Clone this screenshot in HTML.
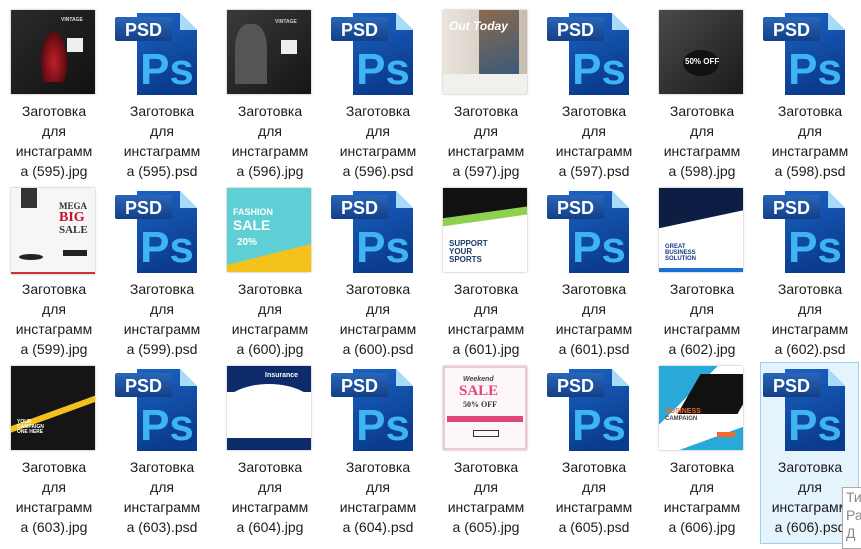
<!DOCTYPE html>
<html><head><meta charset="utf-8"><style>
body{margin:0;width:861px;height:538px;background:#fff;position:relative;overflow:hidden;font-family:"Liberation Sans","DejaVu Sans",sans-serif;}
.it{position:absolute;width:108px;height:178px}
.lbl{position:absolute;left:0;top:91px;width:108px;text-align:center;font-size:14px;line-height:20px;color:#1b1b1b}
.th{position:absolute;left:11px;top:0;width:84px;height:84px;overflow:hidden;box-shadow:0 0 2px rgba(0,0,0,.35)}
.ps{position:absolute;left:0;top:-10px}
.t{position:absolute;font-family:"Liberation Sans",sans-serif;font-weight:bold;line-height:1}
.sel{position:absolute;left:760px;top:362px;width:97px;height:180px;border:1px solid #99d1f4;background:#e5f3fd}
.tip{position:absolute;left:842px;top:487px;width:30px;height:60px;border:1px solid #aaa;background:#fff;font-size:14px;color:#888;line-height:18px;padding-left:3px}
</style></head><body>
<div class="sel"></div>
<svg width="0" height="0" style="position:absolute"><defs>
<linearGradient id="g" x1="0" y1="0" x2="0.3" y2="1"><stop offset="0" stop-color="#1b63c4"/><stop offset="1" stop-color="#0a3b8c"/></linearGradient>
<linearGradient id="tg" x1="0" y1="0" x2="0" y2="1"><stop offset="0" stop-color="#2a66b8"/><stop offset="1" stop-color="#143f86"/></linearGradient>
<g id="psd">
<path d="M29 13 L72 13 L89 30 L89 95 L29 95 Z" fill="url(#g)"/>
<path d="M72 13 L72 30 L89 30 Z" fill="#a8dbf7"/>
<rect x="7" y="17" width="57" height="24" rx="2" fill="url(#tg)"/>
<text x="35.5" y="36" font-family="Liberation Sans" font-weight="bold" font-size="18" fill="#fff" text-anchor="middle">PSD</text>
<text x="59" y="84" font-family="Liberation Sans" font-weight="bold" font-size="44" fill="#3fb4f2" text-anchor="middle">Ps</text>
</g></defs></svg>

<!-- Row 1 -->
<div class="it" style="left:0;top:10px"><div class="th" style="background:linear-gradient(135deg,#2a2a2a,#111)"><div style="position:absolute;left:30px;top:22px;width:26px;height:50px;background:radial-gradient(ellipse at 50% 60%,#c0202a,#5a0a10 70%,transparent 72%)"></div><div class="t" style="left:50px;top:8px;color:#ddd;font-size:5px">VINTAGE</div><div style="position:absolute;left:56px;top:28px;width:16px;height:14px;background:#eee"></div></div><div class="lbl">Заготовка<br>для<br>инстаграмм<br>а (595).jpg</div></div>
<div class="it" style="left:108px;top:0"><svg class="ps" width="108" height="100" style="top:0"><use href="#psd"/></svg><div class="lbl" style="top:101px">Заготовка<br>для<br>инстаграмм<br>а (595).psd</div></div>
<div class="it" style="left:216px;top:10px"><div class="th" style="background:linear-gradient(135deg,#3a3a3a,#151515)"><div style="position:absolute;left:8px;top:14px;width:32px;height:60px;background:#555;border-radius:40% 40% 0 0"></div><div class="t" style="left:48px;top:10px;color:#ccc;font-size:5px">VINTAGE</div><div style="position:absolute;left:54px;top:30px;width:16px;height:14px;background:#eee"></div></div><div class="lbl">Заготовка<br>для<br>инстаграмм<br>а (596).jpg</div></div>
<div class="it" style="left:324px;top:0"><svg class="ps" width="108" height="100" style="top:0"><use href="#psd"/></svg><div class="lbl" style="top:101px">Заготовка<br>для<br>инстаграмм<br>а (596).psd</div></div>
<div class="it" style="left:432px;top:10px"><div class="th" style="background:linear-gradient(90deg,#e9e4dc,#c8bcae)"><div style="position:absolute;left:36px;top:0;width:40px;height:64px;background:linear-gradient(160deg,#8a6a50,#3a5a78)"></div><div style="position:absolute;left:0;top:64px;width:84px;height:20px;background:#f2f0ec"></div><div class="t" style="left:6px;top:10px;color:#fff;font-size:12px;font-style:italic">Out Today</div></div><div class="lbl">Заготовка<br>для<br>инстаграмм<br>а (597).jpg</div></div>
<div class="it" style="left:540px;top:0"><svg class="ps" width="108" height="100" style="top:0"><use href="#psd"/></svg><div class="lbl" style="top:101px">Заготовка<br>для<br>инстаграмм<br>а (597).psd</div></div>
<div class="it" style="left:648px;top:10px"><div class="th" style="background:linear-gradient(135deg,#4a4a4a,#1a1a1a)"><div style="position:absolute;left:24px;top:40px;width:36px;height:26px;border-radius:50%;background:#111"></div><div class="t" style="left:26px;top:48px;color:#fff;font-size:8px">50% OFF</div></div><div class="lbl">Заготовка<br>для<br>инстаграмм<br>а (598).jpg</div></div>
<div class="it" style="left:756px;top:0"><svg class="ps" width="108" height="100" style="top:0"><use href="#psd"/></svg><div class="lbl" style="top:101px">Заготовка<br>для<br>инстаграмм<br>а (598).psd</div></div>

<!-- Row 2 -->
<div class="it" style="left:0;top:188px"><div class="th" style="background:#f6f6f6;border-bottom:2px solid #c33"><div style="position:absolute;left:10px;top:0;width:16px;height:20px;background:#333"></div><div class="t" style="left:48px;top:14px;color:#333;font-size:9px;font-family:'Liberation Serif'">MEGA</div><div class="t" style="left:48px;top:23px;color:#c8102e;font-size:14px;font-family:'Liberation Serif'">BIG</div><div class="t" style="left:48px;top:37px;color:#333;font-size:11px;font-family:'Liberation Serif'">SALE</div><div style="position:absolute;left:52px;top:62px;width:24px;height:6px;background:#222"></div><div style="position:absolute;left:8px;top:66px;width:24px;height:6px;border-radius:50%;background:#222"></div></div><div class="lbl">Заготовка<br>для<br>инстаграмм<br>а (599).jpg</div></div>
<div class="it" style="left:108px;top:178px"><svg class="ps" width="108" height="100" style="top:0"><use href="#psd"/></svg><div class="lbl" style="top:101px">Заготовка<br>для<br>инстаграмм<br>а (599).psd</div></div>
<div class="it" style="left:216px;top:188px"><div class="th" style="background:#5ecfd4"><div style="position:absolute;left:0;top:56px;width:84px;height:30px;background:#f4c21a;transform:skewY(-14deg);transform-origin:right"></div><div class="t" style="left:6px;top:20px;color:#fff;font-size:9px">FASHION</div><div class="t" style="left:6px;top:30px;color:#fff;font-size:14px">SALE</div><div class="t" style="left:10px;top:50px;color:#fff;font-size:10px">20%</div></div><div class="lbl">Заготовка<br>для<br>инстаграмм<br>а (600).jpg</div></div>
<div class="it" style="left:324px;top:178px"><svg class="ps" width="108" height="100" style="top:0"><use href="#psd"/></svg><div class="lbl" style="top:101px">Заготовка<br>для<br>инстаграмм<br>а (600).psd</div></div>
<div class="it" style="left:432px;top:188px"><div class="th" style="background:#fff"><div style="position:absolute;left:-10px;top:-30px;width:110px;height:56px;background:#111;transform:rotate(-8deg)"></div><div style="position:absolute;left:-10px;top:24px;width:110px;height:8px;background:#8fd14f;transform:rotate(-8deg)"></div><div class="t" style="left:6px;top:52px;color:#1a3a6a;font-size:8px">SUPPORT<br>YOUR<br>SPORTS</div></div><div class="lbl">Заготовка<br>для<br>инстаграмм<br>а (601).jpg</div></div>
<div class="it" style="left:540px;top:178px"><svg class="ps" width="108" height="100" style="top:0"><use href="#psd"/></svg><div class="lbl" style="top:101px">Заготовка<br>для<br>инстаграмм<br>а (601).psd</div></div>
<div class="it" style="left:648px;top:188px"><div class="th" style="background:#fff"><div style="position:absolute;left:-10px;top:-26px;width:110px;height:56px;background:#0c1e44;transform:rotate(-12deg)"></div><div class="t" style="left:6px;top:56px;color:#1a3a8a;font-size:6px">GREAT<br>BUSINESS<br>SOLUTION</div><div style="position:absolute;left:0;top:80px;width:84px;height:4px;background:#1b6fd0"></div></div><div class="lbl">Заготовка<br>для<br>инстаграмм<br>а (602).jpg</div></div>
<div class="it" style="left:756px;top:178px"><svg class="ps" width="108" height="100" style="top:0"><use href="#psd"/></svg><div class="lbl" style="top:101px">Заготовка<br>для<br>инстаграмм<br>а (602).psd</div></div>

<!-- Row 3 -->
<div class="it" style="left:0;top:366px"><div class="th" style="background:#151515"><div style="position:absolute;left:-10px;top:44px;width:110px;height:6px;background:#f2c21b;transform:rotate(-20deg)"></div><div class="t" style="left:6px;top:54px;color:#fff;font-size:5px">YOUR<br>CAMPAIGN<br>ONE HERE</div></div><div class="lbl">Заготовка<br>для<br>инстаграмм<br>а (603).jpg</div></div>
<div class="it" style="left:108px;top:356px"><svg class="ps" width="108" height="100" style="top:0"><use href="#psd"/></svg><div class="lbl" style="top:101px">Заготовка<br>для<br>инстаграмм<br>а (603).psd</div></div>
<div class="it" style="left:216px;top:366px"><div class="th" style="background:#fff"><div style="position:absolute;left:0;top:0;width:84px;height:26px;background:#0d2a6a"></div><div style="position:absolute;left:0;top:72px;width:84px;height:12px;background:#0d2a6a"></div><div style="position:absolute;left:-6px;top:18px;width:96px;height:52px;border-radius:50%;background:#fff"></div><div class="t" style="left:38px;top:6px;color:#fff;font-size:7px">Insurance</div></div><div class="lbl">Заготовка<br>для<br>инстаграмм<br>а (604).jpg</div></div>
<div class="it" style="left:324px;top:356px"><svg class="ps" width="108" height="100" style="top:0"><use href="#psd"/></svg><div class="lbl" style="top:101px">Заготовка<br>для<br>инстаграмм<br>а (604).psd</div></div>
<div class="it" style="left:432px;top:366px"><div class="th" style="background:#fdf7f9;border:2px solid #f2c6d6;box-sizing:border-box"><div class="t" style="left:18px;top:8px;color:#444;font-size:7px;font-style:italic">Weekend</div><div class="t" style="left:14px;top:16px;color:#e0457b;font-size:15px;font-family:'Liberation Serif'">SALE</div><div class="t" style="left:18px;top:33px;color:#333;font-size:8px;font-family:'Liberation Serif'">50% OFF</div><div style="position:absolute;left:2px;top:48px;width:76px;height:6px;background:#e0457b"></div><div style="position:absolute;left:28px;top:62px;width:24px;height:5px;border:1px solid #333"></div></div><div class="lbl">Заготовка<br>для<br>инстаграмм<br>а (605).jpg</div></div>
<div class="it" style="left:540px;top:356px"><svg class="ps" width="108" height="100" style="top:0"><use href="#psd"/></svg><div class="lbl" style="top:101px">Заготовка<br>для<br>инстаграмм<br>а (605).psd</div></div>
<div class="it" style="left:648px;top:366px"><div class="th" style="background:#fff"><div style="position:absolute;left:0;top:0;width:84px;height:84px;background:linear-gradient(135deg,#29a9d8 0 35%,transparent 35%)"></div><div style="position:absolute;left:30px;top:8px;width:60px;height:40px;background:#111;transform:skewX(-30deg)"></div><div style="position:absolute;left:0;top:60px;width:90px;height:30px;background:linear-gradient(160deg,transparent 50%,#29a9d8 50%)"></div><div class="t" style="left:6px;top:42px;color:#f26a2a;font-size:7px">BUSINESS</div><div class="t" style="left:6px;top:50px;color:#444;font-size:6px">CAMPAIGN</div><div style="position:absolute;left:58px;top:66px;width:18px;height:5px;background:#f26a2a"></div></div><div class="lbl">Заготовка<br>для<br>инстаграмм<br>а (606).jpg</div></div>
<div class="it" style="left:756px;top:356px"><svg class="ps" width="108" height="100" style="top:0"><use href="#psd"/></svg><div class="lbl" style="top:101px">Заготовка<br>для<br>инстаграмм<br>а (606).psd</div></div>
<div class="tip">Ти<br>Ра<br>Д</div>
</body></html>
